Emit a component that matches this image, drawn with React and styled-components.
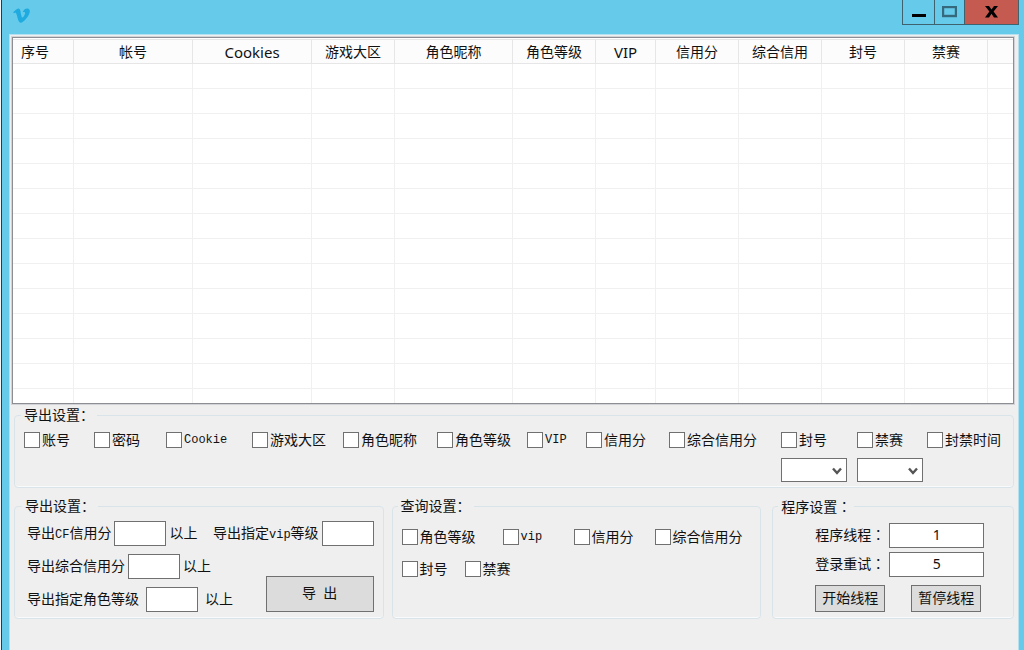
import React, { useState } from 'react'
import styled, { createGlobalStyle } from 'styled-components'
import { FaVimeoV } from 'react-icons/fa'

const GlobalStyle = createGlobalStyle`
* {
  box-sizing: border-box;
}
body {
  margin: 0;
  background: #f4f6f7;
  color: #111;
  font-family: "Noto Sans", "Noto Sans CJK SC", sans-serif;
  font-size: 14px;
}
button, input, select {
  font-family: inherit;
  font-size: inherit;
  color: inherit;
}
`

const Window = styled.div`
  display: flex;
  flex-direction: column;
  min-height: 100vh;
  margin-left: 1px;
  padding: 0 5px 0 7px;
  border-left: 1px solid #2c3a42;
  background: #66caea;
`

const TitleBar = styled.header`
  display: flex;
  justify-content: space-between;
  height: 34px;
  padding-left: 3px;
`

const Logo = styled(FaVimeoV)`
  width: 19px;
  height: 19px;
  margin-top: 6px;
  color: #1fabe0;
`

const WindowButtons = styled.div`
  display: flex;
  height: 25px;
  border: 1px solid #3f626f;
  border-top: none;
`

const WindowButton = styled.button`
  display: flex;
  align-items: center;
  justify-content: center;
  width: ${(p) => p.$width}px;
  padding: 0;
  border: none;
  border-left: ${(p) => (p.$first ? 'none' : '1px solid #3f626f')};
  background: ${(p) => (p.$danger ? '#c45a50' : 'transparent')};
`

const Client = styled.main`
  flex: 1;
  padding: 2px 4px 24px 2px;
  border: 1px solid #b4e0f0;
  border-bottom: none;
  background: #efefef;
`

const ListFrame = styled.div`
  height: 367px;
  padding-top: 1px;
  border: 1px solid #8c8e94;
  background: #fff;
  box-shadow: 0 0 0 1px #d2d3d6;
  overflow: hidden;
`

const ListTable = styled.table`
  width: 100%;
  table-layout: fixed;
  border-collapse: separate;
  border-spacing: 0;
`

const HeadCell = styled.th`
  width: ${(p) => (p.$width ? p.$width + 'px' : 'auto')};
  height: 25px;
  padding: 0 ${(p) => (p.$left ? 8 : 0)}px;
  border: 1px solid #e6e6e6;
  border-left: none;
  border-right-width: ${(p) => (p.$width ? 1 : 0)}px;
  background: #fcfcfc;
  font-size: ${(p) => (p.$latin ? 15 : 14)}px;
  font-weight: 400;
  line-height: 20px;
  text-align: ${(p) => (p.$left ? 'left' : 'center')};
`

const Cell = styled.td`
  height: 25px;
  padding: 0;
  border-right: 1px solid #f0f0f0;
  border-bottom: 1px solid #f0f0f0;

  &:last-child {
    border-right: none;
  }
`

const Group = styled.fieldset`
  min-width: 0;
  margin: 0;
  padding: ${(p) => p.$padding || '6px 9px 5px'};
  border: 1px solid #d9e4ea;
  border-radius: 4px;
  box-shadow: inset 0 -1px 0 #f8fafb;
`

const ExportGroup = styled(Group)`
  margin: 2px 0 9px 2px;
`

const Legend = styled.legend`
  margin-left: ${(p) => p.$indent}px;
  padding: 0 3px;
  line-height: 18px;
`

const Groups = styled.div`
  display: grid;
  grid-template-columns: 370fr 370fr 245fr;
  gap: 8px;
  margin-left: 2px;
`

const ProgramGroup = styled(Group)`
  margin-left: 3px;
`

const ExportGrid = styled.div`
  display: grid;
  grid-template-columns: 70px 72px 86px 91px 94px 90px 59px 83px 112px 76px 70px auto;
  grid-template-rows: 20px 24px;
  row-gap: 8px;
`

const QueryGrid = styled.div`
  display: grid;
  grid-template-columns: ${(p) => p.$columns};
  margin-bottom: 12px;
`

const CheckLabel = styled.label`
  display: flex;
  align-items: center;
  gap: 2px;
  height: 20px;
  white-space: nowrap;
`

const CheckBox = styled.input`
  appearance: none;
  flex: none;
  width: 16px;
  height: 16px;
  margin: 0;
  border: 1px solid #707070;
  background: #fff;

  &:checked {
    box-shadow: inset 0 0 0 3px #fff;
    background: #333;
  }
`

const Caption = styled.span`
  padding-bottom: 3px;
`

const Latin = styled.span`
  font-family: "Liberation Mono", monospace;
  font-size: 12px;
`

const Colon = styled.span`
  font-family: "Noto Sans CJK TC", sans-serif;
`

const SelectBox = styled.div`
  position: relative;
  grid-row: 2;
  grid-column: ${(p) => p.$column};
  width: 66px;
  height: 24px;
`

const Select = styled.select`
  appearance: none;
  width: 100%;
  height: 100%;
  padding: 0 18px 0 4px;
  border: 1px solid #707070;
  border-radius: 0;
  background: #fff;
`

const Arrow = styled.svg`
  position: absolute;
  top: 9px;
  right: 5px;
  pointer-events: none;
`

const Row = styled.div`
  display: flex;
  align-items: center;
  justify-content: space-between;
  height: 25px;
`

const Field = styled.label`
  display: flex;
  align-items: center;
  gap: ${(p) => p.$gap}px;
  white-space: nowrap;
`

const TextBox = styled.input`
  width: ${(p) => p.$width}px;
  height: 25px;
  padding: 0 4px 2px;
  border: 1px solid #707070;
  border-radius: 0;
  background: #fff;
  text-align: center;
`

const ExportBody = styled.div`
  display: flex;
  align-items: flex-end;
  justify-content: space-between;
  margin-top: 8px;
`

const Stack = styled.div`
  display: flex;
  flex-direction: column;
  gap: ${(p) => p.$gap}px;
`

const Button = styled.button`
  width: ${(p) => p.$width}px;
  height: ${(p) => p.$height}px;
  padding: 0 0 4px;
  border: 1px solid #707070;
  border-radius: 0;
  background: #dcdcdc;
  white-space: pre;
`

const ButtonRow = styled.div`
  display: flex;
  gap: 26px;
  margin-top: 8px;
`

const columns = [
  { title: '序号', width: 61 },
  { title: '帐号', width: 119 },
  { title: 'Cookies', width: 119, latin: true },
  { title: '游戏大区', width: 83 },
  { title: '角色昵称', width: 118 },
  { title: '角色等级', width: 83 },
  { title: 'VIP', width: 60, latin: true },
  { title: '信用分', width: 83 },
  { title: '综合信用', width: 83 },
  { title: '封号', width: 83 },
  { title: '禁赛', width: 83 },
  { title: '' },
]

const rows = Array.from({ length: 14 }, (_, i) => i)

const exportFields = [
  '账号', '密码', 'Cookie', '游戏大区', '角色昵称', '角色等级',
  'VIP', '信用分', '综合信用分', '封号', '禁赛', '封禁时间',
]

const Check = ({ text }) => (
  <CheckLabel>
    <CheckBox type='checkbox' />
    {/^[a-z]+$/i.test(text) ? <Latin>{text}</Latin> : <Caption>{text}</Caption>}
  </CheckLabel>
)

const DropDown = ({ column, label }) => (
  <SelectBox $column={column}>
    <Select aria-label={label} defaultValue=''>
      <option value=''></option>
      <option value='yes'>是</option>
      <option value='no'>否</option>
    </Select>
    <Arrow width='10' height='9' viewBox='0 0 10 9'>
      <path d='M1 1.5 L5 6 L9 1.5' fill='none' stroke='#555' strokeWidth='2.4' />
    </Arrow>
  </SelectBox>
)

const App = () => {

  const [threads, setThreads] = useState('1')
  const [retries, setRetries] = useState('5')

  return (
    <>
      <GlobalStyle />
      <Window>
        <TitleBar>
          <Logo />
          <WindowButtons>
            <WindowButton $width={31} $first aria-label='最小化'>
              <svg width='14' height='12' viewBox='0 0 14 12'>
                <rect x='0' y='8' width='14' height='3' fill='#000' />
              </svg>
            </WindowButton>
            <WindowButton $width={30} aria-label='最大化'>
              <svg width='15' height='12' viewBox='0 0 15 12'>
                <rect x='1' y='1' width='13' height='9' fill='none' stroke='#35697b' strokeWidth='2.4' />
              </svg>
            </WindowButton>
            <WindowButton $width={54} $danger aria-label='关闭'>
              <svg width='13' height='12' viewBox='0 0 13 12'>
                <path d='M0 0 H4 L6.5 3.6 L9 0 H13 L8.6 5.6 L13 11.5 H9 L6.5 7.8 L4 11.5 H0 L4.4 5.6 Z' fill='#000' />
              </svg>
            </WindowButton>
          </WindowButtons>
        </TitleBar>

        <Client>
          <ListFrame>
            <ListTable>
              <thead>
                <tr>
                  {columns.map((c, i) => (
                    <HeadCell key={i} $width={c.width} $latin={c.latin} $left={i === 0}>{c.title}</HeadCell>
                  ))}
                </tr>
              </thead>
              <tbody>
                {rows.map((r) => (
                  <tr key={r}>
                    {columns.map((c, i) => <Cell key={i} />)}
                  </tr>
                ))}
              </tbody>
            </ListTable>
          </ListFrame>

          <ExportGroup>
            <Legend $indent={-3}>导出设置：</Legend>
            <ExportGrid>
              {exportFields.map((text) => <Check key={text} text={text} />)}
              <DropDown column={10} label='封号' />
              <DropDown column={11} label='禁赛' />
            </ExportGrid>
          </ExportGroup>

          <Groups>
            <Group $padding='6px 9px 5px 12px'>
              <Legend $indent={-5}>导出设置：</Legend>
              <Row>
                <Field $gap={3}>
                  <Caption>导出<Latin>CF</Latin>信用分</Caption>
                  <TextBox type='text' $width={52} />
                  <Caption>以上</Caption>
                </Field>
                <Field $gap={3}>
                  <Caption>导出指定<Latin>vip</Latin>等级</Caption>
                  <TextBox type='text' $width={52} />
                </Field>
              </Row>
              <ExportBody>
                <Stack $gap={8}>
                  <Field $gap={3}>
                    <Caption>导出综合信用分</Caption>
                    <TextBox type='text' $width={52} />
                    <Caption>以上</Caption>
                  </Field>
                  <Field $gap={7}>
                    <Caption>导出指定角色等级</Caption>
                    <TextBox type='text' $width={52} />
                    <Caption>以上</Caption>
                  </Field>
                </Stack>
                <Button type='button' $width={108} $height={36}>导  出</Button>
              </ExportBody>
            </Group>

            <Group $padding='12px 9px 5px'>
              <Legend $indent={-4}>查询设置：</Legend>
              <QueryGrid $columns='101px 71px 81px auto'>
                <Check text='角色等级' />
                <Check text='vip' />
                <Check text='信用分' />
                <Check text='综合信用分' />
              </QueryGrid>
              <QueryGrid $columns='63px auto'>
                <Check text='封号' />
                <Check text='禁赛' />
              </QueryGrid>
            </Group>

            <ProgramGroup $padding='7px 0 6px 42px'>
              <Legend $indent={-37}>程序设置<Colon>：</Colon></Legend>
              <Stack $gap={4}>
                <Field $gap={4}>
                  <Caption>程序线程<Colon>：</Colon></Caption>
                  <TextBox type='text' $width={95} value={threads} onChange={(e) => setThreads(e.target.value)} />
                </Field>
                <Field $gap={4}>
                  <Caption>登录重试<Colon>：</Colon></Caption>
                  <TextBox type='text' $width={95} value={retries} onChange={(e) => setRetries(e.target.value)} />
                </Field>
              </Stack>
              <ButtonRow>
                <Button type='button' $width={70} $height={27}>开始线程</Button>
                <Button type='button' $width={70} $height={27}>暂停线程</Button>
              </ButtonRow>
            </ProgramGroup>
          </Groups>
        </Client>
      </Window>
    </>
  )
}

export default App
